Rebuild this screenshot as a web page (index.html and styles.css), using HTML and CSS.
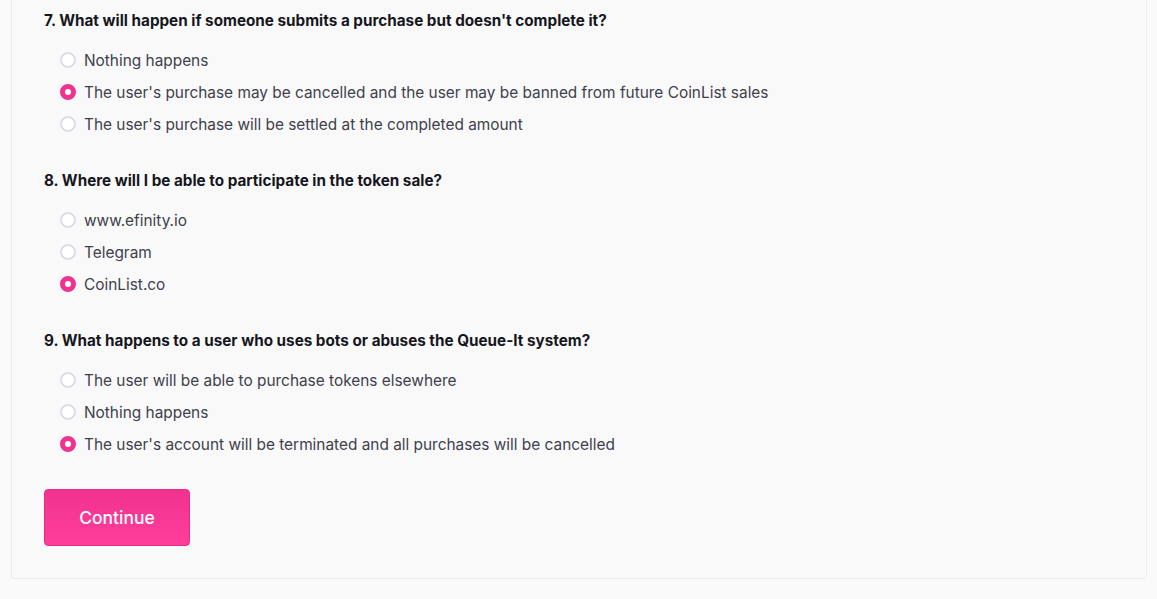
FILE: index.html
```html
<!DOCTYPE html>
<html>
<head>
<meta charset="utf-8">
<link rel="stylesheet" href="styles.css">
</head>
<body>
<div class="page">
  <div class="card">
    <div class="question">
      <h3 class="q-title">7. What will happen if someone submits a purchase but doesn't complete it?</h3>
      <ul class="options">
        <li class="option"><span class="radio"></span><span>Nothing happens</span></li>
        <li class="option"><span class="radio checked"></span><span>The user's purchase may be cancelled and the user may be banned from future CoinList sales</span></li>
        <li class="option"><span class="radio"></span><span>The user's purchase will be settled at the completed amount</span></li>
      </ul>
    </div>
    <div class="question">
      <h3 class="q-title">8. Where will I be able to participate in the token sale?</h3>
      <ul class="options">
        <li class="option"><span class="radio"></span><span>www.efinity.io</span></li>
        <li class="option"><span class="radio"></span><span>Telegram</span></li>
        <li class="option"><span class="radio checked"></span><span>CoinList.co</span></li>
      </ul>
    </div>
    <div class="question last">
      <h3 class="q-title">9. What happens to a user who uses bots or abuses the Queue-It system?</h3>
      <ul class="options">
        <li class="option"><span class="radio"></span><span>The user will be able to purchase tokens elsewhere</span></li>
        <li class="option"><span class="radio"></span><span>Nothing happens</span></li>
        <li class="option"><span class="radio checked"></span><span>The user's account will be terminated and all purchases will be cancelled</span></li>
      </ul>
    </div>
    <button class="btn">Continue</button>
  </div>
</div>
</body>
</html>
```

FILE: styles.css
```css
* { box-sizing: border-box; }
html, body { margin: 0; padding: 0; }
body {
  background: #fafafb;
  font-family: Inter, "Liberation Sans", sans-serif;
  color: #3c3c48;
}
.page {
  padding: 0 10px 20px 11px;
}
.card {
  margin-top: -20px;
  border: 1px solid #ebebf2;
  border-radius: 3px;
  background: #f9f9fa;
  padding: 30px 32px 32px 32px;
  width: 1136px;
}
.question { margin-bottom: 31px; }
.question.last { margin-bottom: 29px; }
.q-title {
  margin: 0;
  font-size: 15.25px;
  font-weight: 700;
  color: #16161d;
  line-height: 20px;
}
.options {
  list-style: none;
  margin: 13px 0 0 0;
  padding: 0 0 0 16px;
}
.option {
  display: flex;
  align-items: center;
  height: 32px;
  font-size: 15.4px;
  color: #40404c;
}
.radio {
  width: 16px;
  height: 16px;
  border-radius: 50%;
  border: 2px solid #dcdde6;
  background: #fff;
  margin-right: 8px;
  flex: none;
}
.radio.checked {
  border: 5px solid #f0338f;
  background: #fff;
}
.btn {
  display: block;
  margin-top: 0;
  width: 146px;
  height: 57px;
  border: 1px solid #e62d86;
  border-radius: 4px;
  background: linear-gradient(#f0338f, #ff3d9b);
  color: #fff;
  font-family: inherit;
  font-size: 17.5px;
  font-weight: 500;
}
```
